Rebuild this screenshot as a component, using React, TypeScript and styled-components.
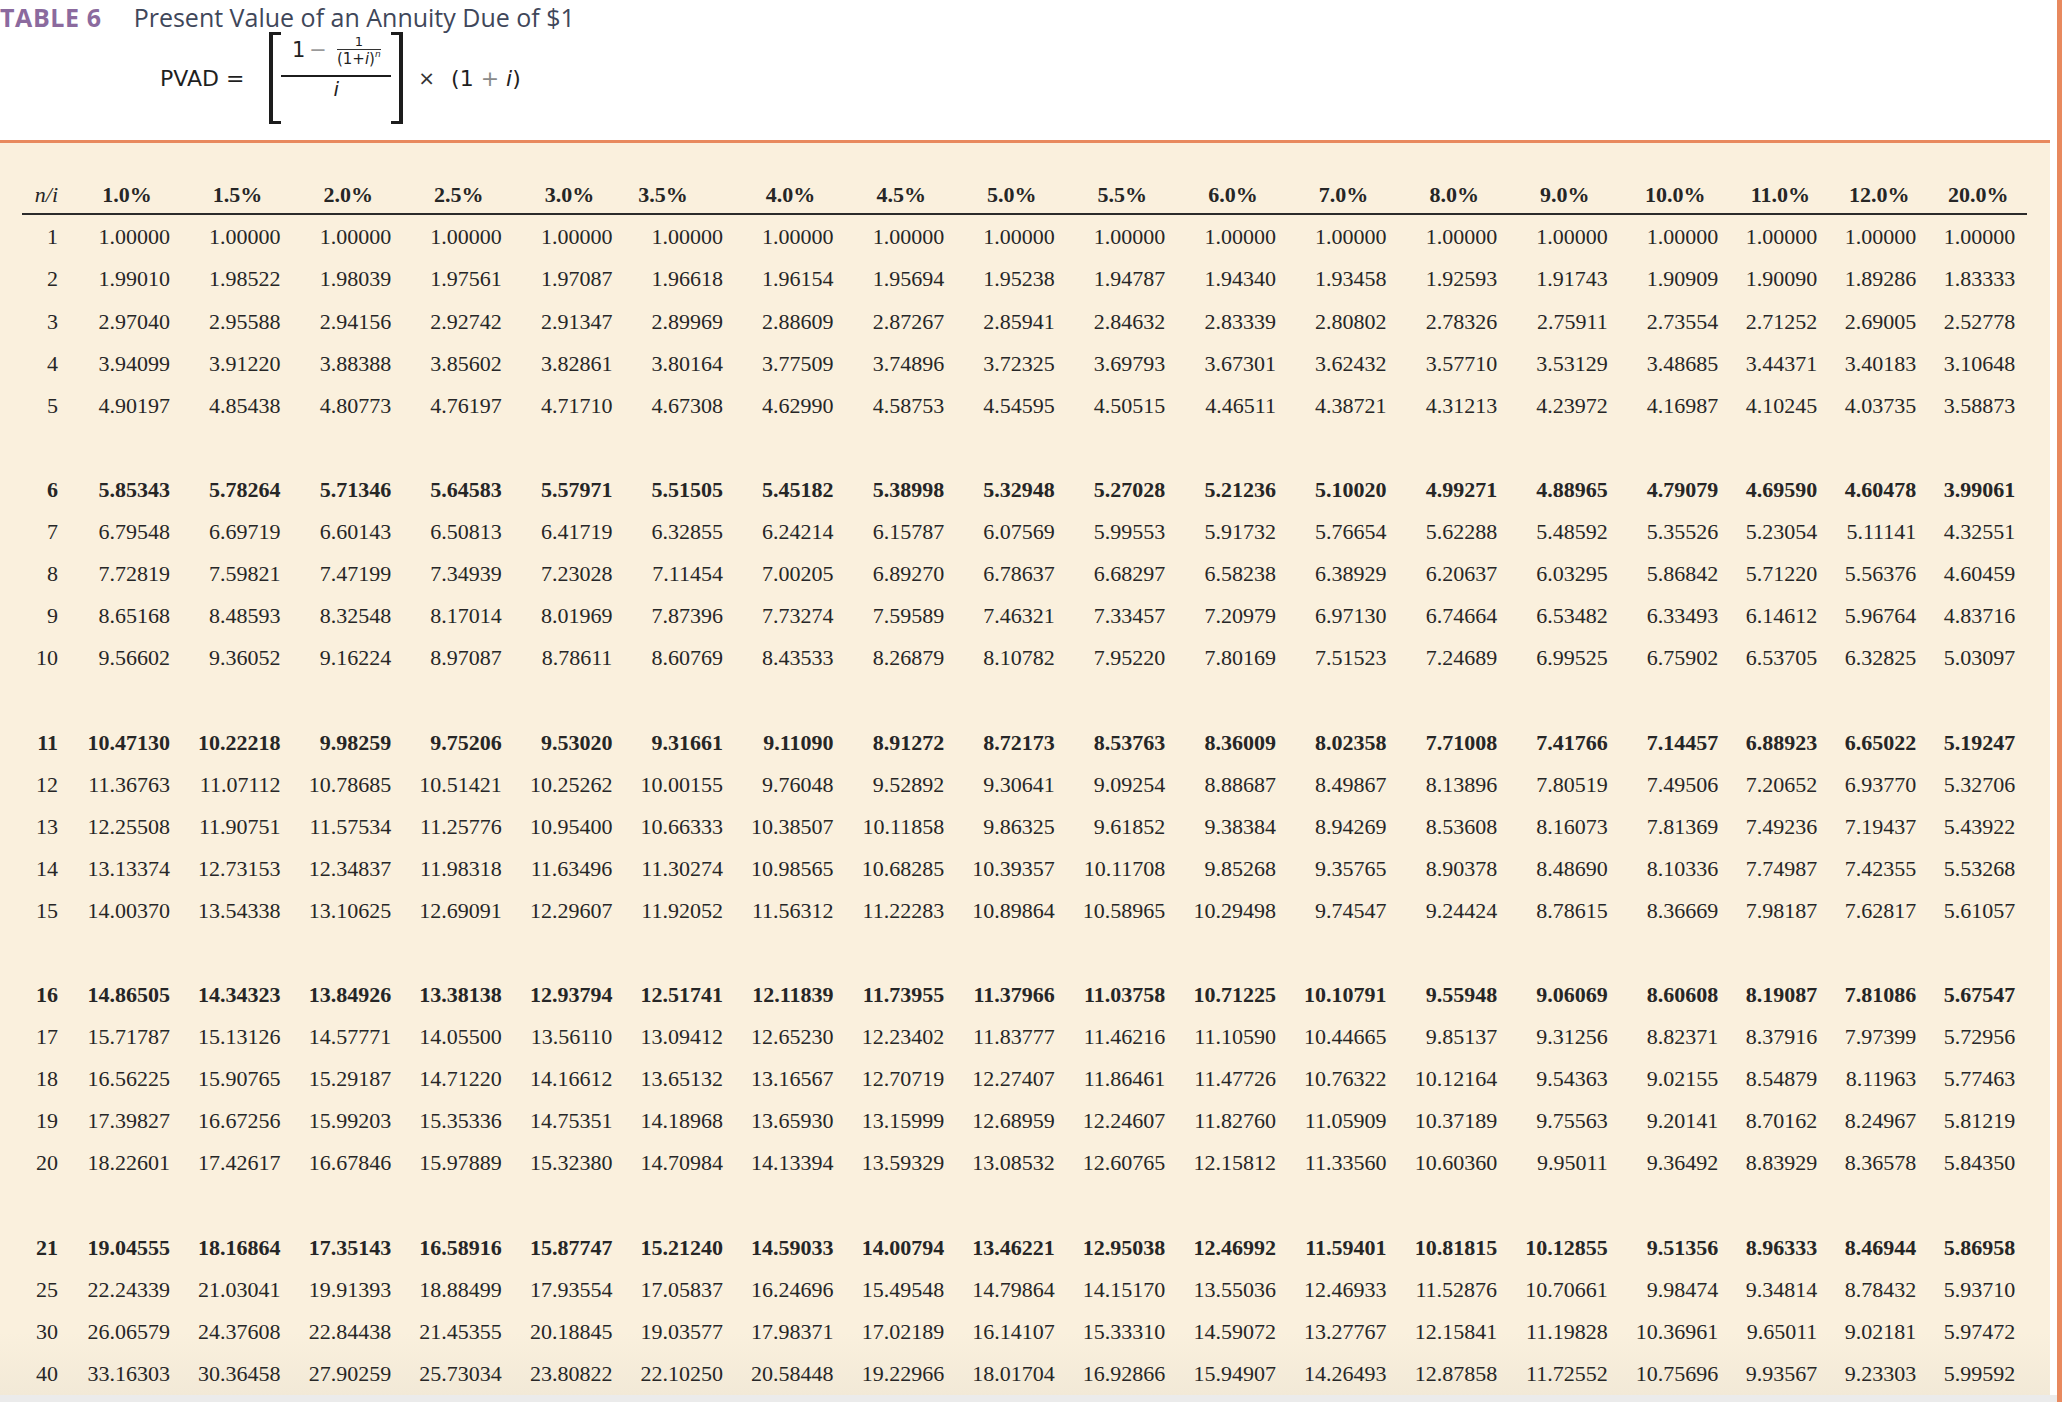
import React from 'react';
import styled, { createGlobalStyle } from 'styled-components';

const GlobalStyle = createGlobalStyle`
  html, body {
    margin: 0;
    padding: 0;
    background: #ffffff;
  }
  body {
    width: 2062px;
    height: 1402px;
    overflow: hidden;
  }
`;

const ORANGE = '#e8895e';
const INK = '#262626';

const Page = styled.div`
  width: 2062px;
  height: 1402px;
  box-sizing: border-box;
  padding-right: 7px;
  padding-bottom: 7px;
  border-right: 5px solid ${ORANGE};
  background: linear-gradient(to bottom, #ffffff 0, #ffffff 1395px, #ebebeb 1395px);
`;

const Sheet = styled.div`
  width: 2050px;
  height: 1395px;
  display: flex;
  flex-direction: column;
`;

const Header = styled.header`
  height: 144px;
  border-bottom: 3px solid ${ORANGE};
  background: #ffffff;
`;

const TitleRow = styled.div`
  display: flex;
  align-items: baseline;
  gap: 32px;
  padding-top: 1px;
  height: 31px;
  line-height: 32px;
  font-family: 'Open Sans', 'Liberation Sans', sans-serif;
  font-size: 25px;
`;

const TableTag = styled.span`
  font-weight: 700;
  color: #8b6a9e;
  letter-spacing: 0.6px;
`;

const Caption = styled.span`
  font-weight: 400;
  color: #3f475a;
`;

const Formula = styled.div`
  display: flex;
  align-items: center;
  height: 92px;
  margin-left: 160px;
  font-family: 'DejaVu Sans', 'Liberation Sans', sans-serif;
  color: #1f1f1f;
`;

const Lhs = styled.span`
  font-size: 22px;
  margin-right: 25px;
  white-space: nowrap;
`;

const Bracketed = styled.div`
  display: flex;
  align-self: stretch;
`;

const Bracket = styled.span<{ $side: 'left' | 'right' }>`
  width: 8px;
  border: 4px solid #1c1c1c;
  border-top-width: 3px;
  border-bottom-width: 3px;
  ${(p) => (p.$side === 'left' ? 'border-right: none;' : 'border-left: none;')}
`;

const Fraction = styled.div`
  width: 110px;
  display: flex;
  flex-direction: column;
  align-items: center;
  padding-top: 1px;
`;

const Numer = styled.div`
  height: 34px;
  margin-bottom: 8px;
  display: flex;
  align-items: center;
  gap: 4px;
`;

const BigOne = styled.span`
  font-size: 21px;
  line-height: 22px;
`;

const Minus = styled.span`
  font-size: 21px;
  line-height: 22px;
  color: #9a9a9a;
  margin-right: 6px;
`;

const SmallFrac = styled.div`
  display: flex;
  flex-direction: column;
  align-items: center;
  margin-top: 3px;
`;

const SmallTop = styled.span`
  font-size: 13px;
  line-height: 14px;
`;

const SmallBar = styled.span`
  align-self: stretch;
  border-top: 1px solid #333;
`;

const SmallBottom = styled.span`
  font-size: 15px;
  line-height: 19px;
  white-space: nowrap;
`;

const Sup = styled.sup`
  font-size: 9px;
  font-style: italic;
  vertical-align: 7px;
  line-height: 0;
`;

const Var = styled.i`
  font-style: italic;
`;

const MainBar = styled.span`
  align-self: stretch;
  border-top: 2px solid #1c1c1c;
`;

const Denom = styled.span`
  font-size: 20px;
  line-height: 24px;
  font-style: italic;
`;

const Times = styled.span`
  font-size: 20px;
  color: #333;
  margin: 0 16px 0 15px;
`;

const Factor = styled.span`
  font-size: 22px;
  white-space: nowrap;
`;

const Faint = styled.span`
  color: #8a8a8a;
`;

const Panel = styled.main`
  flex: 1;
  padding: 40px 23px 0 22px;
  background: linear-gradient(to bottom, #faf0dd 0, #faf0dd 95%, #f2e9d7 100%);
  font-family: 'Liberation Serif', 'Times New Roman', serif;
  font-size: 22px;
  color: ${INK};
`;

const COLUMNS = '36px 112px repeat(14, 110.6px) repeat(3, 99px)';

const HeadRow = styled.div`
  display: grid;
  grid-template-columns: ${COLUMNS};
  padding-bottom: 6px;
  border-bottom: 2px solid #2b2b2b;
  line-height: 24px;
  font-weight: 700;
`;

const HeadCell = styled.div`
  display: flex;
  justify-content: flex-end;
`;

const CornerLabel = styled.span`
  font-style: italic;
  font-weight: 400;
`;

const RateLabel = styled.span<{ $nudge: number }>`
  width: 72px;
  text-align: center;
  margin-right: ${(p) => p.$nudge}px;
  white-space: nowrap;
`;

const Body = styled.div`
  padding-top: 1px;
`;

const Group = styled.div`
  & + & {
    margin-top: 42.1px;
  }
`;

const Row = styled.div<{ $bold: boolean }>`
  display: grid;
  grid-template-columns: ${COLUMNS};
  height: 42.1px;
  line-height: 42.1px;
  font-weight: ${(p) => (p.$bold ? 700 : 400)};
`;

const Cell = styled.div`
  text-align: right;
  white-space: nowrap;
`;

const rates = [1, 1.5, 2, 2.5, 3, 3.5, 4, 4.5, 5, 5.5, 6, 7, 8, 9, 10, 11, 12, 20];

const groups = [
  [1, 2, 3, 4, 5],
  [6, 7, 8, 9, 10],
  [11, 12, 13, 14, 15],
  [16, 17, 18, 19, 20],
  [21, 25, 30, 40],
];

// header labels sit a little left of the figures below them
const nudgeFor = (index: number) => {
  if (index === 5) return 24;
  if (index >= 15) return 1;
  return 7;
};

const pvad = (n: number, rate: number) => {
  const i = rate / 100;
  return (((1 - Math.pow(1 + i, -n)) / i) * (1 + i)).toFixed(5);
};

const App: React.FC = () => {
  return (
    <>
      <GlobalStyle />
      <Page>
        <Sheet>
          <Header>
            <TitleRow>
              <TableTag>TABLE 6</TableTag>
              <Caption>Present Value of an Annuity Due of $1</Caption>
            </TitleRow>
            <Formula>
              <Lhs>PVAD =</Lhs>
              <Bracketed>
                <Bracket $side="left" />
                <Fraction>
                  <Numer>
                    <BigOne>1</BigOne>
                    <Minus>−</Minus>
                    <SmallFrac>
                      <SmallTop>1</SmallTop>
                      <SmallBar />
                      <SmallBottom>
                        (1+<Var>i</Var>)<Sup>n</Sup>
                      </SmallBottom>
                    </SmallFrac>
                  </Numer>
                  <MainBar />
                  <Denom>i</Denom>
                </Fraction>
                <Bracket $side="right" />
              </Bracketed>
              <Times>×</Times>
              <Factor>
                (1 <Faint>+</Faint> <Var>i</Var>)
              </Factor>
            </Formula>
          </Header>
          <Panel>
            <HeadRow>
              <HeadCell>
                <CornerLabel>n/i</CornerLabel>
              </HeadCell>
              {rates.map((rate, index) => (
                <HeadCell key={rate}>
                  <RateLabel $nudge={nudgeFor(index)}>{rate.toFixed(1)}%</RateLabel>
                </HeadCell>
              ))}
            </HeadRow>
            <Body>
              {groups.map((periods, groupIndex) => (
                <Group key={periods[0]}>
                  {periods.map((n, rowIndex) => (
                    <Row key={n} $bold={groupIndex > 0 && rowIndex === 0}>
                      <Cell>{n}</Cell>
                      {rates.map((rate) => (
                        <Cell key={rate}>{pvad(n, rate)}</Cell>
                      ))}
                    </Row>
                  ))}
                </Group>
              ))}
            </Body>
          </Panel>
        </Sheet>
      </Page>
    </>
  );
};

export default App;
